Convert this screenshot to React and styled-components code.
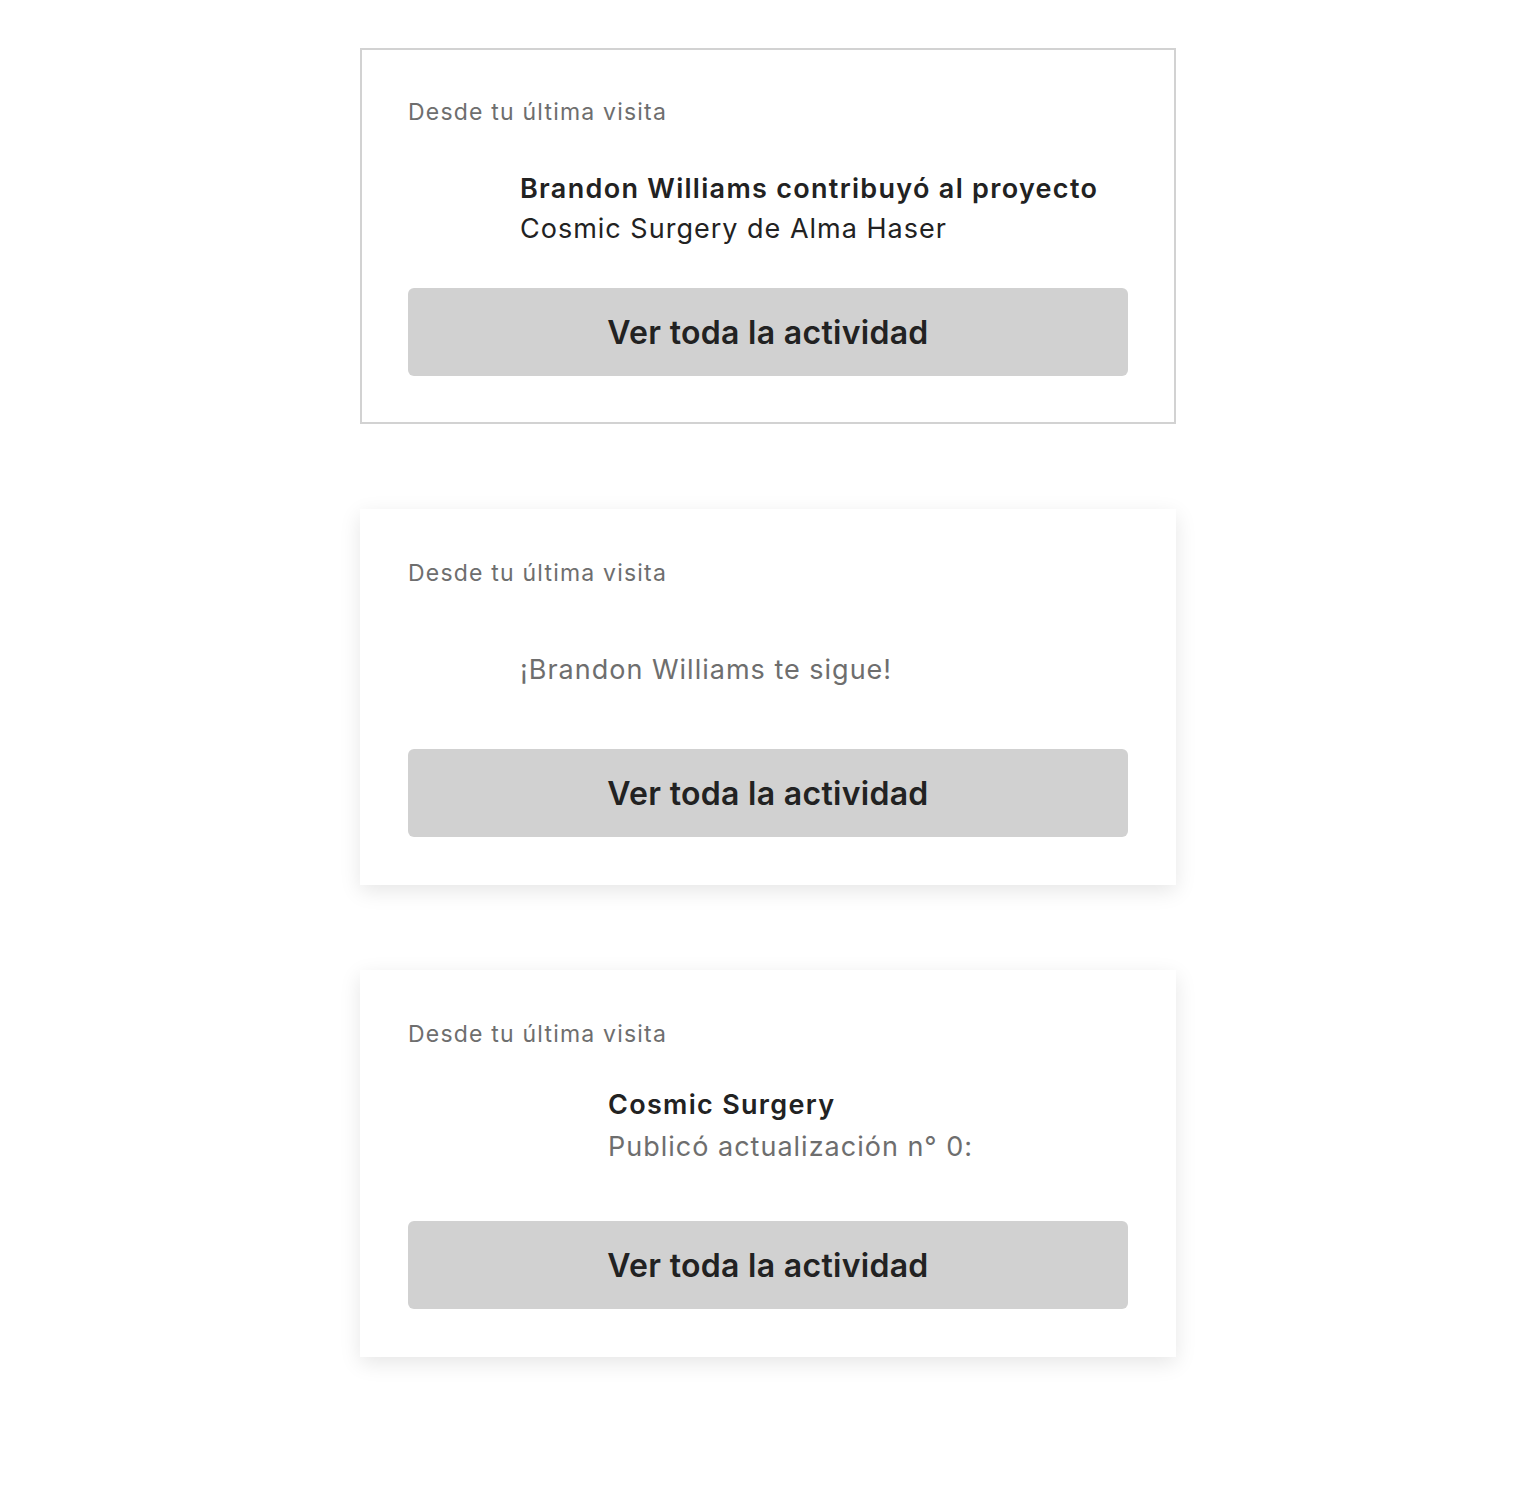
import React from 'react';
import styled, { createGlobalStyle } from 'styled-components';

const GlobalStyle = createGlobalStyle`
  body {
    margin: 0;
    background: #ffffff;
    font-family: Inter, "Noto Sans", "Liberation Sans", sans-serif;
  }
`;

const items = [
  {
    id: 1,
    variant: 'outlined',
    thumb: { w: 96, h: 80 },
    layout: 'contribution',
    title: 'Brandon Williams contribuyó al proyecto',
    body: 'Cosmic Surgery de Alma Haser',
  },
  {
    id: 2,
    variant: 'raised',
    thumb: { w: 96, h: 80 },
    layout: 'follow',
    body: '¡Brandon Williams te sigue!',
  },
  {
    id: 3,
    variant: 'raised',
    thumb: { w: 184, h: 91 },
    layout: 'update',
    title: 'Cosmic Surgery',
    body: 'Publicó actualización n° 0:',
  },
];

const App = () => {
  return (
    <React.Fragment>
      <GlobalStyle />
      <Page>
        {items.map((item) => (
          <Card key={item.id} variant={item.variant}>
            <Heading>Desde tu última visita</Heading>
            <Activity>
              <Thumb w={item.thumb.w} h={item.thumb.h} />
              {item.layout === 'follow' ? (
                <FollowText>{item.body}</FollowText>
              ) : (
                <TextBlock>
                  <Title compact={item.layout === 'update'}>{item.title}</Title>
                  <Body compact={item.layout === 'update'}>{item.body}</Body>
                </TextBlock>
              )}
            </Activity>
            <ViewAllButton>Ver toda la actividad</ViewAllButton>
          </Card>
        ))}
      </Page>
    </React.Fragment>
  );
};

export default App;

const Page = styled.div`
  display: flex;
  flex-direction: column;
  align-items: center;
  gap: 85px;
  padding: 48px 0 120px;
`;

const Card = styled.div`
  box-sizing: border-box;
  width: 816px;
  background: #ffffff;
  padding: ${({ variant }) => (variant === 'outlined' ? '46px' : '48px')};
  border: ${({ variant }) => (variant === 'outlined' ? '2px solid #d2d2d2' : 'none')};
  box-shadow: ${({ variant }) =>
    variant === 'outlined' ? 'none' : '0 6px 20px rgba(0, 0, 0, 0.1)'};
  display: flex;
  flex-direction: column;
`;

const Heading = styled.div`
  font-size: 23px;
  letter-spacing: 1.2px;
  line-height: 33px;
  color: #6e6e6e;
`;

const Activity = styled.div`
  display: flex;
  align-items: flex-start;
  gap: 16px;
  margin: 40px 0 39px;
`;

const Thumb = styled.div`
  flex: none;
  width: ${({ w }) => w}px;
  height: ${({ h }) => h}px;
`;

const TextBlock = styled.div`
  display: flex;
  flex-direction: column;
`;

const Title = styled.div`
  font-size: 27px;
  font-weight: 600;
  letter-spacing: 1.3px;
  color: #222222;
  line-height: ${({ compact }) => (compact ? '28px' : '40px')};
`;

const Body = styled.div`
  font-size: 27px;
  letter-spacing: 1px;
  color: ${({ compact }) => (compact ? '#6e6e6e' : '#222222')};
  line-height: ${({ compact }) => (compact ? '28px' : '40px')};
  margin-top: ${({ compact }) => (compact ? '14px' : '0')};
`;

const FollowText = styled.div`
  font-size: 27px;
  letter-spacing: 1px;
  line-height: 80px;
  color: #6e6e6e;
`;

const ViewAllButton = styled.button`
  height: 88px;
  width: 100%;
  border: none;
  border-radius: 6px;
  background: #d1d1d1;
  color: #222222;
  font-family: inherit;
  font-size: 32px;
  font-weight: 600;
  letter-spacing: 0.3px;
  cursor: pointer;
`;
